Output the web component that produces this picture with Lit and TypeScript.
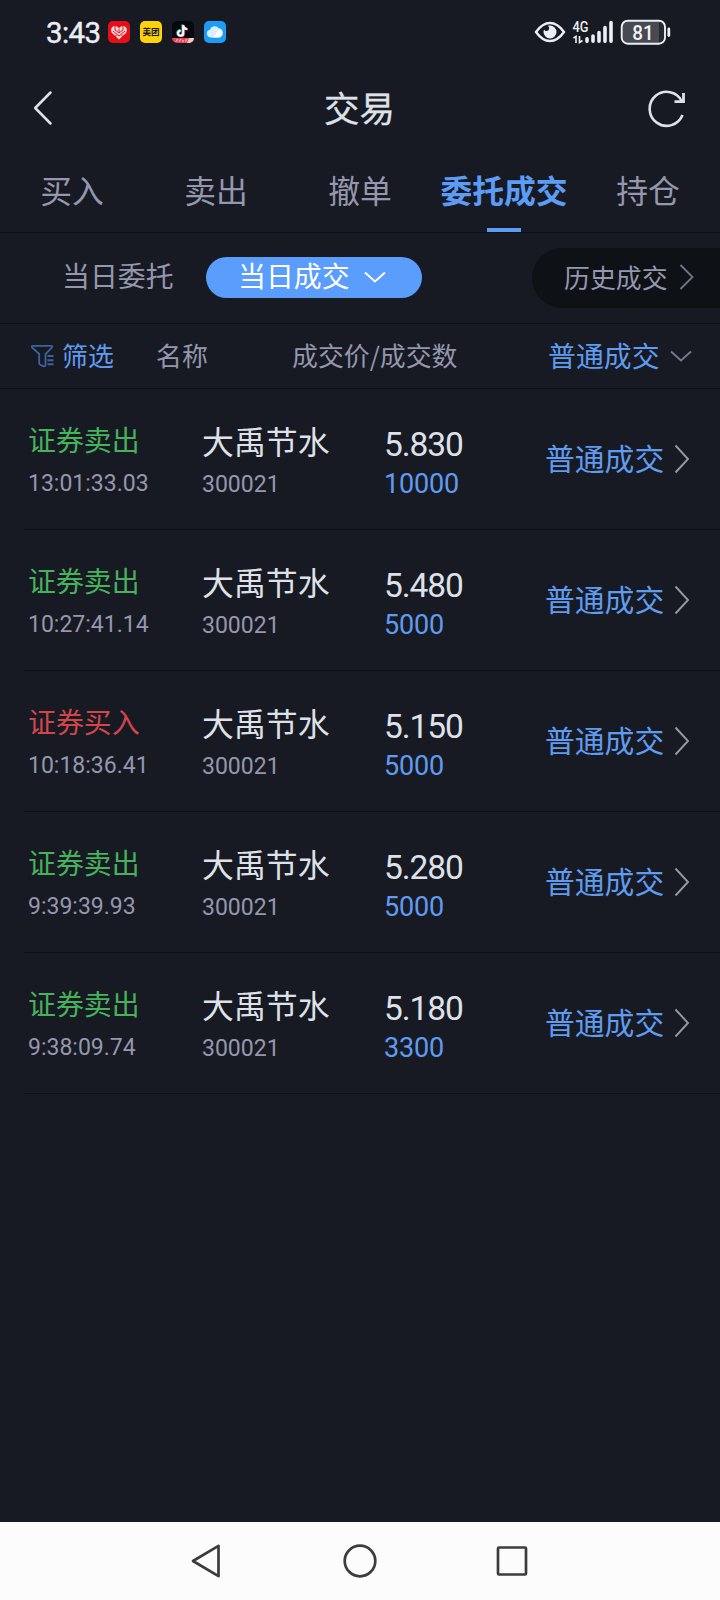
import { LitElement, html, css, svg } from "lit";
import { customElement, property } from "lit/decorators.js";
import { classMap } from "lit/directives/class-map.js";

interface Deal {
  side: "buy" | "sell";
  time: string;
  name: string;
  code: string;
  price: string;
  qty: string;
}

const DEALS: Deal[] = [
  { side: "sell", time: "13:01:33.03", name: "大禹节水", code: "300021", price: "5.830", qty: "10000" },
  { side: "sell", time: "10:27:41.14", name: "大禹节水", code: "300021", price: "5.480", qty: "5000" },
  { side: "buy", time: "10:18:36.41", name: "大禹节水", code: "300021", price: "5.150", qty: "5000" },
  { side: "sell", time: "9:39:39.93", name: "大禹节水", code: "300021", price: "5.280", qty: "5000" },
  { side: "sell", time: "9:38:09.74", name: "大禹节水", code: "300021", price: "5.180", qty: "3300" },
];

const TABS = ["买入", "卖出", "撤单", "委托成交", "持仓"];

@customElement("status-bar")
class StatusBar extends LitElement {
  static styles = css`
    :host { display: flex; align-items: center; justify-content: space-between; height: 64px; padding: 0 49px 0 46px; box-sizing: border-box; }
    .left { display: flex; align-items: center; gap: 10px; }
    .time { font: 400 29.500px/34px Roboto, sans-serif; color: #eceef3; width: 52px; letter-spacing: -0.6px; white-space: nowrap; padding-top: 2px; -webkit-text-stroke: 0.4px #eceef3; }
    svg { display: block; }
  `;
  render() {
    return html`
      <div class="left">
        <span class="time">3:43</span>
        <svg width="22" height="22" viewBox="0 0 22 22">
          <rect width="22" height="22" rx="5" fill="#e60f18" />
          <path d="M11 18.500L4.600 12.600C2.200 10 3 6.200 5.600 5.200C8 4.300 10 5.600 11 7.600C12 5.600 14 4.300 16.400 5.200C19 6.200 19.800 10 17.400 12.600Z" fill="#fbd9da" />
          <path d="M7 5v4l4 3 4-3V5M5 10l6 5 6-5M11 8v3M8 13.500v2M14 13.500v2" fill="none" stroke="#e60f18" stroke-width="1" />
        </svg>
        <svg width="22" height="22" viewBox="0 0 22 22">
          <rect width="22" height="22" rx="5" fill="#fcd20c" />
          <text x="11" y="14.300" text-anchor="middle" font-family="Noto Sans CJK SC, sans-serif" font-weight="700" font-size="8.500" fill="#17150c">美团</text>
        </svg>
        <svg width="22" height="22" viewBox="0 0 22 22">
          <defs><clipPath id="c"><rect width="22" height="22" rx="5" /></clipPath></defs>
          <g clip-path="url(#c)">
            <rect width="22" height="22" fill="#07080f" />
            <g fill="none" stroke-width="2">
              <path d="M11 4v8.200a2.600 2.600 0 1 1-2.600-2.600M11 4.400a4 4 0 0 0 4 3.600" stroke="#28e0e0" transform="translate(-.5 -.4)" />
              <path d="M11 4v8.200a2.600 2.600 0 1 1-2.600-2.600M11 4.400a4 4 0 0 0 4 3.600" stroke="#f0345c" transform="translate(.9 .5)" />
              <path d="M11 4v8.200a2.600 2.600 0 1 1-2.600-2.600M11 4.400a4 4 0 0 0 4 3.600" stroke="#fff" transform="translate(.3 0)" />
            </g>
            <path d="M0 17h22v5H0z" fill="#e8455a" />
            <path d="M4 20.500l1.500-2.500M7 20.500l2-2.500M10 20h2M13.500 20.500l1-2.500" stroke="#ffe3e3" stroke-width="1" />
            <path d="M17 17h5v5h-7z" fill="#f4c9bd" />
          </g>
        </svg>
        <svg width="22" height="22" viewBox="0 0 22 22">
          <rect width="22" height="22" rx="5" fill="#1c9cf4" />
          <path d="M6.500 16.400a3.900 3.900 0 0 1-.5-7.700A5 5 0 0 1 14.800 7.200a4.700 4.700 0 0 1 .6 9.200Z" fill="#d9effd" />
          <path d="M7 16.400c3 0 4-1.700 5-3.700S14 9 16.700 9.300a4.500 4.500 0 0 1-1.300 7.100Z" fill="#fff" />
        </svg>
      </div>
      <svg width="137" height="26" viewBox="534 19 137 26">
        <path d="M536 32C541 25 545.500 23 550 23s9 2 14 9c-5 7-9.500 9-14 9s-9-2-14-9Z" fill="none" stroke="#eceef3" stroke-width="2.400" />
        <path d="M550 25.500a6.500 6.500 0 1 1-6.500 6.500c0-1 .2-1.800.6-2.600 1 2.200 4.400 2 5-.4.3-1.500-.3-2.900-1.400-3.100.7-.3 1.500-.4 2.300-.4Z" fill="#eceef3" />
        <text x="572.500" y="31.800" font-family="Roboto, sans-serif" font-weight="500" font-size="15" textLength="16" lengthAdjust="spacingAndGlyphs" fill="#eceef3">4G</text>
        <path d="M573.500 38l2.500-1.500V43M579.500 36v6.500l3-2" fill="none" stroke="#eceef3" stroke-width="1.600" />
        <g stroke="#eceef3" stroke-width="3.600" stroke-linecap="round">
          <path d="M587 38.700v2.600M593 36v5.300M599 32.500v8.800M605 27.500v13.800M611 22.500v18.800" />
        </g>
        <rect x="621.700" y="20.700" width="43.300" height="23" rx="6" fill="#474a52" />
        <path d="M659 21h2a4 4 0 0 1 4 4v14a4 4 0 0 1-4 4h-2z" fill="#262932" />
        <rect x="621.700" y="20.700" width="43.300" height="23" rx="6" fill="none" stroke="#eceef3" stroke-width="1.900" />
        <text x="643" y="39.800" text-anchor="middle" font-family="Roboto, sans-serif" font-weight="500" font-size="21" textLength="21.500" lengthAdjust="spacingAndGlyphs" fill="#f2f3f6">81</text>
        <path d="M668.800 29v6.500" stroke="#eceef3" stroke-width="2.800" stroke-linecap="round" />
      </svg>
    `;
  }
}

@customElement("deal-row")
class DealRow extends LitElement {
  @property({ attribute: false }) deal!: Deal;
  static styles = css`
    :host { display: block; padding-left: 24px; }
    .row { display: grid; grid-template-columns: 174px 182px 161px 1fr; height: 140px; border-bottom: 1px solid #0e1017; padding-left: 4px; }
    .cell { display: flex; flex-direction: column; white-space: nowrap; }
    .side { margin-top: 32px; font-size: 27.900px; line-height: 36px; }
    .sell { color: #46b35c; }
    .buy { color: #d2464b; }
    .time, .code { font: 400 23px/28px Roboto, sans-serif; color: #9497ad; }
    .time { margin-top: 13px; }
    .name { margin-top: 31px; font-size: 31.900px; line-height: 40px; color: #dfe1e8; }
    .code { margin-top: 11px; }
    .price { margin-top: 36px; font: 400 33.500px/40px Roboto, sans-serif; letter-spacing: -1.100px; color: #dfe1e8; }
    .qty { margin-top: 3px; font: 400 27px/32px Roboto, sans-serif; letter-spacing: -.2px; color: #5f9cf0; }
    .kind { display: flex; flex-direction: row; align-items: flex-start; padding-top: 48px; font-size: 29.800px; line-height: 40px; color: #5f9cf0; }
    .kind svg { margin: 7px 0 0 10px; }
  `;
  render() {
    const d = this.deal;
    return html`<div class="row">
      <div class="cell">
        <span class=${classMap({ side: true, [d.side]: true })}>${d.side === "buy" ? "证券买入" : "证券卖出"}</span>
        <span class="time">${d.time}</span>
      </div>
      <div class="cell"><span class="name">${d.name}</span><span class="code">${d.code}</span></div>
      <div class="cell"><span class="price">${d.price}</span><span class="qty">${d.qty}</span></div>
      <div class="kind">普通成交
        <svg width="16" height="30" viewBox="0 0 16 30"><path d="M1.500 1.500L14 15 1.500 28.500" fill="none" stroke="#9698a3" stroke-width="1.900" /></svg>
      </div>
    </div>`;
  }
}

@customElement("app-root")
class AppRoot extends LitElement {
  static styles = css`
    :host { display: flex; flex-direction: column; width: 720px; height: 1600px; background: #171a23; overflow: hidden; font-family: "Noto Sans CJK SC", sans-serif; color: #9497ad; }
    svg { display: block; flex: none; }
    .head { display: grid; grid-template-columns: 119px 1fr 120px; align-items: center; height: 88px; }
    .back { margin-left: 33px; }
    .reload { margin-left: 46px; }
    .title { font-size: 35.500px; line-height: 48px; padding-bottom: 3px; text-align: center; color: #dfe1e8; -webkit-text-stroke: 0.3px #dfe1e8; }
    .tabs { display: flex; height: 80px; border-bottom: 1px solid #0e1017; }
    .tab { flex: 1; display: flex; flex-direction: column; align-items: center; justify-content: space-between; padding-top: 15px; box-sizing: border-box; font-size: 31.800px; line-height: 44px; white-space: nowrap; }
    .tab.on { color: #5c9cf5; font-weight: 700; }
    .tab.on::after { content: ""; width: 34px; height: 4px; background: #5c9cf5; }
    .sub { display: flex; height: 90px; border-bottom: 1px solid #0e1017; font-size: 27.900px; line-height: 40px; white-space: nowrap; }
    .orders { width: 144px; padding: 22px 0 0 62px; }
    .today { display: flex; align-items: flex-start; margin-top: 24px; height: 41px; width: 216px; box-sizing: border-box; padding-left: 32px; border-radius: 21px; background: #5a9dfc; color: #fff; line-height: 36px; }
    .today svg { margin: 14px 0 0 14px; }
    .history { display: flex; align-items: flex-start; margin: 15px 0 0 auto; width: 188px; height: 60px; box-sizing: border-box; padding-left: 32px; border-radius: 30px 0 0 30px; background: #0e1115; font-size: 25.900px; line-height: 58px; }
    .history svg { margin: 16px 0 0 11px; }
    .filter { display: grid; grid-template-columns: 156px 136px 256px 1fr; height: 64px; border-bottom: 1px solid #0e1017; font-size: 25.900px; line-height: 62px; white-space: nowrap; }
    .pick { display: flex; padding-left: 30px; gap: 8px; color: #5f9cf0; }
    .pick svg { margin-top: 20px; }
    .type { display: flex; color: #5f9cf0; font-size: 27.900px; }
    .type svg { margin: 26px 0 0 10px; }
    .list { flex: 1; }
    .nav { display: flex; justify-content: center; align-items: center; height: 78px; background: #fcfcfc; }
  `;
  render() {
    const down = (c: string) => svg`<path d="M1 1.500l10 9 10-9" fill="none" stroke=${c} stroke-width="1.900" />`;
    return html`
      <status-bar></status-bar>
      <div class="head">
        <svg class="back" width="20" height="36" viewBox="0 0 20 36"><path d="M17.500 2.500L2.200 18l15.300 15.500" fill="none" stroke="#dfe1e8" stroke-width="2.500" stroke-linecap="round" stroke-linejoin="round" /></svg>
        <div class="title">交易</div>
        <svg class="reload" width="40" height="40" viewBox="0 0 40 40"><path d="M36.500 27A17 17 0 1 1 36 13.500" fill="none" stroke="#dfe1e8" stroke-width="2.600" /><path d="M37.500 5v8.700h-9" fill="none" stroke="#dfe1e8" stroke-width="2.800" /></svg>
      </div>
      <div class="tabs">${TABS.map((t, i) => html`<div class=${classMap({ tab: true, on: i === 3 })}>${t}</div>`)}</div>
      <div class="sub">
        <div class="orders">当日委托</div>
        <div class="today">当日成交<svg width="22" height="13" viewBox="0 0 22 13">${down("#fff")}</svg></div>
        <div class="history">历史成交<svg width="16" height="26" viewBox="0 0 16 26"><path d="M1.500 1L13.500 13 1.500 25" fill="none" stroke="#6f7687" stroke-width="1.800" /></svg></div>
      </div>
      <div class="filter">
        <div class="pick">
          <svg width="24" height="24" viewBox="0 0 24 24"><path d="M3 1.800h18c1.200 0 1.600 1 .8 1.900L15.500 10v11c0 1-.8 1.600-1.800 1.300l-3.500-1.600c-.7-.3-1-.8-1-1.500V10L2.200 3.700C1.400 2.800 1.800 1.800 3 1.800Z" fill="none" stroke="#3d649f" stroke-width="1.800" /><path d="M17.500 12h6M17.500 16.200h6M17.500 20.300h6" stroke="#3d649f" stroke-width="1.900" /></svg>
          <span>筛选</span>
        </div>
        <div>名称</div>
        <div>成交价/成交数</div>
        <div class="type">普通成交<svg width="22" height="13" viewBox="0 0 22 13">${down("#777988")}</svg></div>
      </div>
      <div class="list">${DEALS.map((d) => html`<deal-row .deal=${d}></deal-row>`)}</div>
      <div class="nav">
        <svg width="720" height="78" viewBox="0 1522 720 78" fill="none" stroke="#3c3c3c" stroke-width="2.700" stroke-linejoin="round">
          <path d="M218.500 1545.800v30.400L193 1561Z" />
          <circle cx="360" cy="1561" r="15.300" />
          <rect x="498" y="1547.500" width="28" height="27" rx="1" />
        </svg>
      </div>
    `;
  }
}
